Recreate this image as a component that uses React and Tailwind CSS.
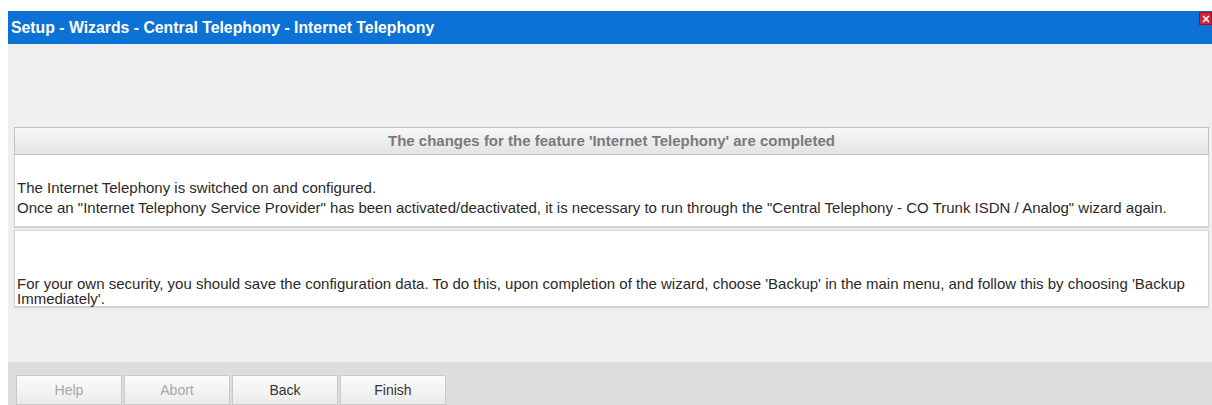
import { X } from "lucide-react";

const buttons = [
  { label: "Help", disabled: true },
  { label: "Abort", disabled: true },
  { label: "Back", disabled: false },
  { label: "Finish", disabled: false },
];

function WizardButton({ label, disabled }) {
  return (
    <button
      type="button"
      className={
        "w-[106px] h-[30px] border border-[#c9c9c9] bg-gradient-to-b from-[#fbfbfb] to-[#ececec] text-[14px] " +
        (disabled ? "text-[#a8a8a8] cursor-default" : "text-[#333]")
      }
    >
      {label}
    </button>
  );
}

export default function App() {
  return (
    <div
      className="h-[405px] w-full bg-white pt-[11px] pl-[8px] flex flex-col overflow-hidden"
      style={{ fontFamily: '"Liberation Sans", Arial, sans-serif' }}
    >
      {/* Title bar */}
      <div className="relative h-[33px] bg-[#0d72d5] flex items-center pl-[3px]">
        <span className="text-white font-bold text-[15.8px]">
          Setup - Wizards - Central Telephony - Internet Telephony
        </span>
        <button
          type="button"
          className="absolute right-0 top-[1px] w-[13px] h-[13px] bg-[#d8213a] border border-[#9c1025] flex items-center justify-center"
        >
          <X className="w-[10px] h-[10px] text-white" strokeWidth={4} />
        </button>
      </div>

      {/* Content */}
      <div className="flex-1 bg-[#efefef] pl-[6px] pr-[3px] pt-[83px]">
        <div className="h-[28px] border border-[#c2c2c2] bg-gradient-to-b from-[#f8f8f8] to-[#e3e3e3] flex items-center justify-center">
          <span className="text-[15px] font-bold text-[#7a7a7a]">
            The changes for the feature 'Internet Telephony' are completed
          </span>
        </div>
        <div className="bg-white border-x border-b border-[#d4d4d4] shadow-[0_1px_1px_rgba(0,0,0,0.12)] h-[72px] pt-[23px] px-[2px] text-[15px] text-[#2a2a2a] leading-[20px]">
          <p>The Internet Telephony is switched on and configured.</p>
          <p>
            Once an "Internet Telephony Service Provider" has been activated/deactivated, it is necessary to run
            through the "Central Telephony - CO Trunk ISDN / Analog" wizard again.
          </p>
        </div>
        <div className="mt-[3px] bg-white border border-[#d4d4d4] shadow-[0_1px_1px_rgba(0,0,0,0.12)] h-[77px] pt-[45px] px-[2px] text-[15px] text-[#2a2a2a] leading-[15px]">
          <p>
            For your own security, you should save the configuration data. To do this, upon completion of the wizard,
            choose 'Backup' in the main menu, and follow this by choosing 'Backup Immediately'.
          </p>
        </div>
      </div>

      {/* Button bar */}
      <div className="h-[43px] shrink-0 bg-[#dddddd] pt-[13px] pl-[8px] flex gap-[2px]">
        {buttons.map((b) => (
          <WizardButton key={b.label} {...b} />
        ))}
      </div>
    </div>
  );
}
